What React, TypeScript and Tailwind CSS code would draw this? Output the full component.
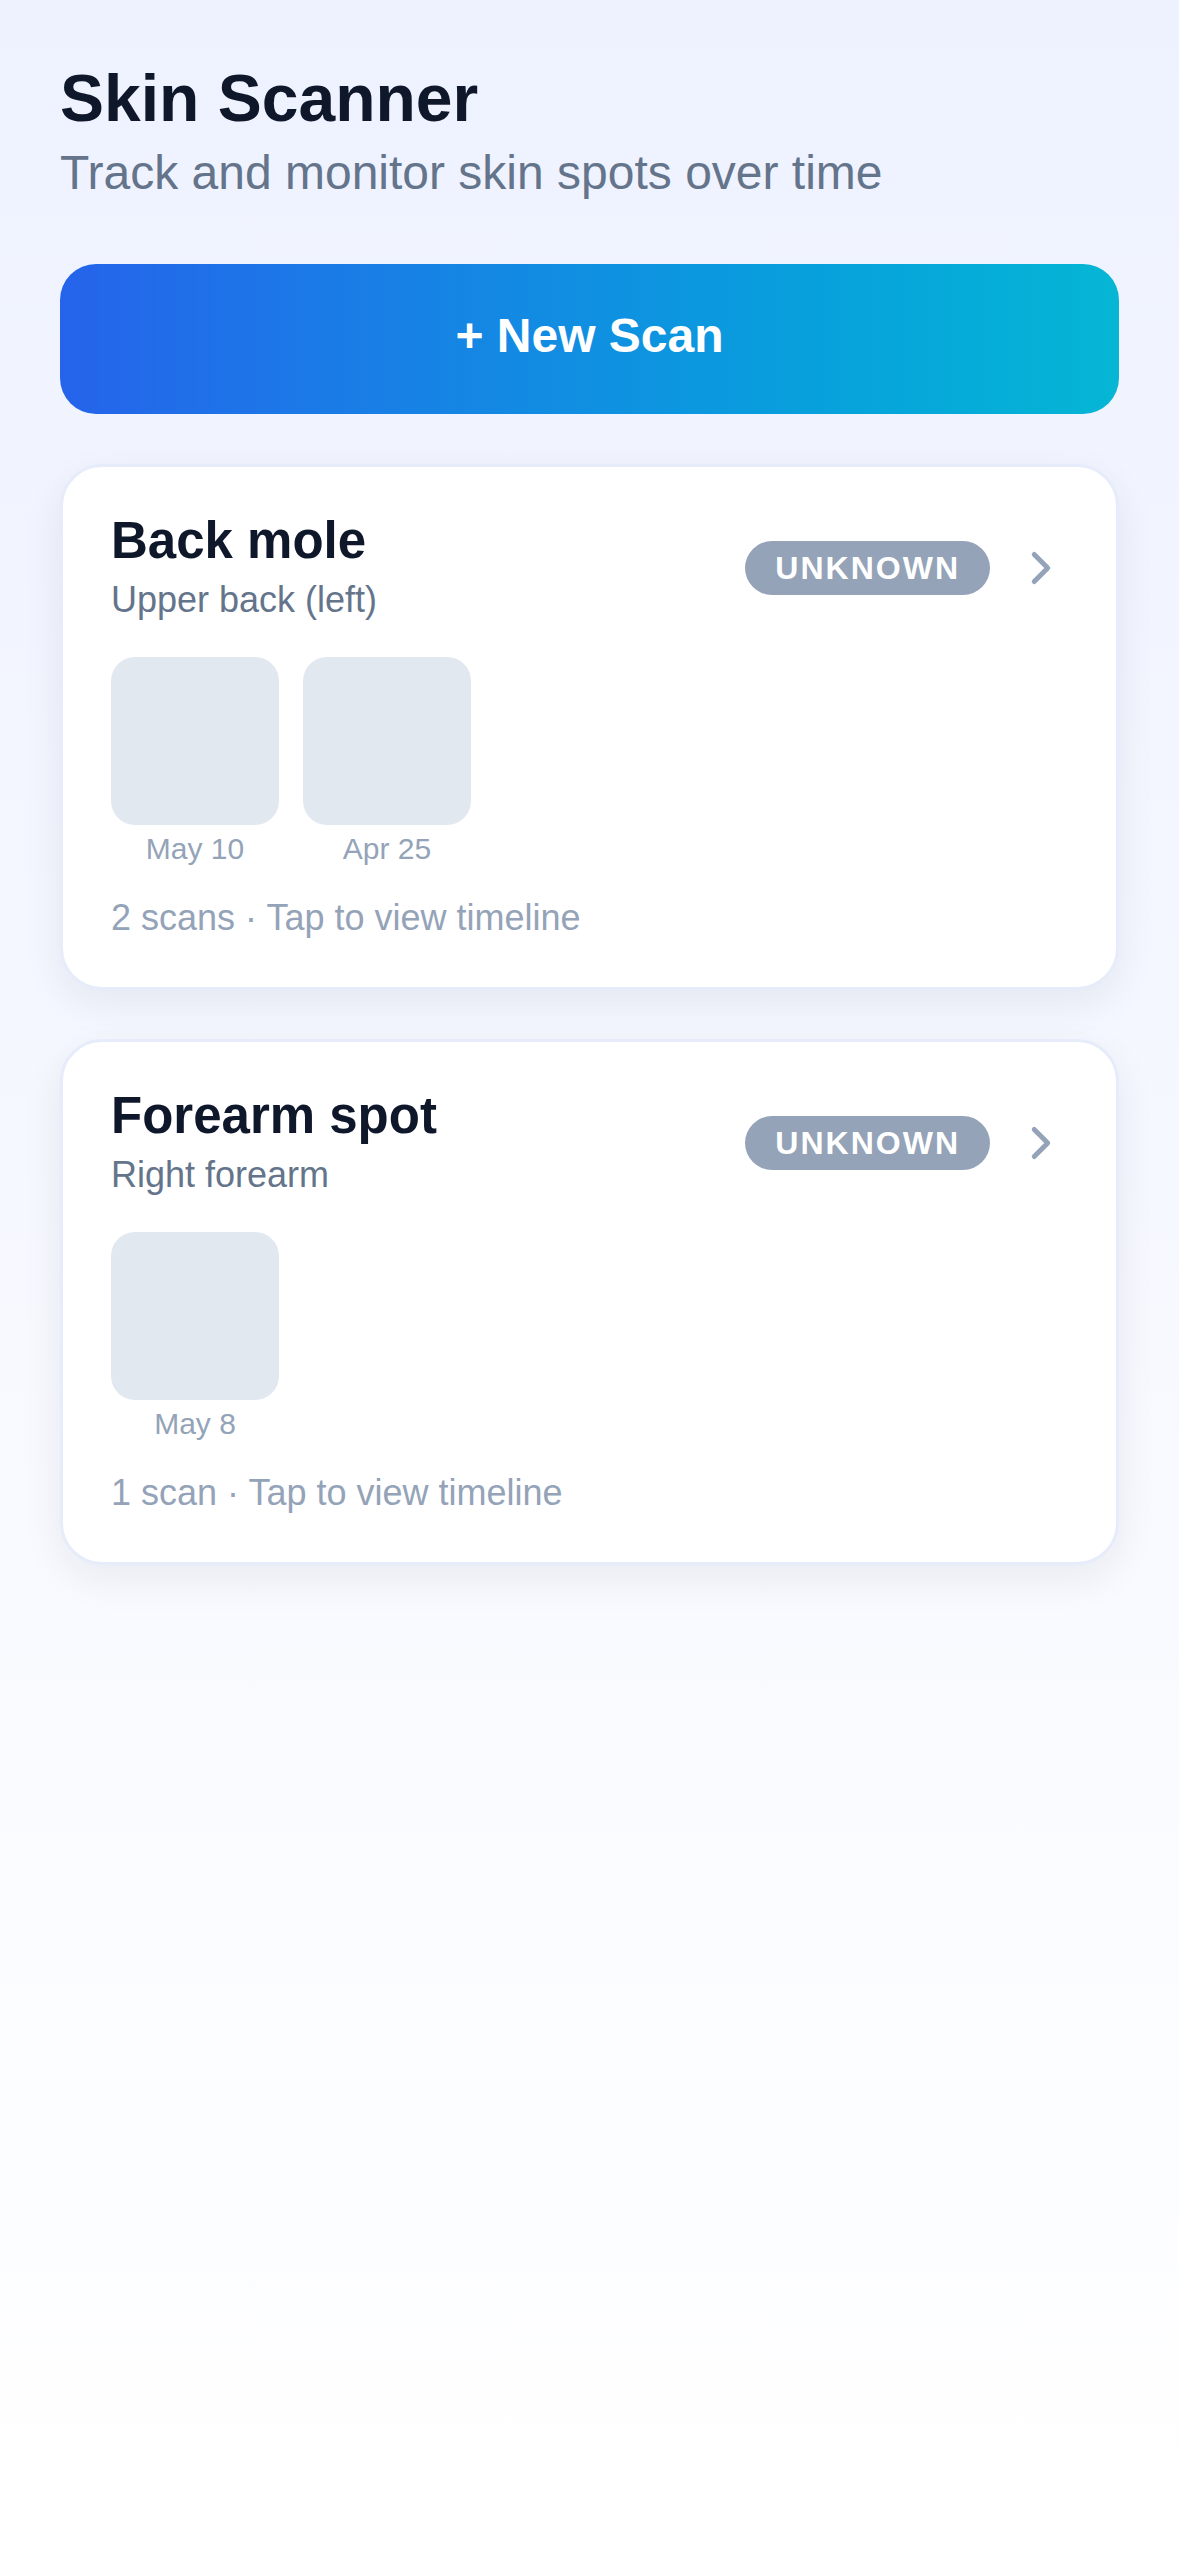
import { ChevronRight } from "lucide-react";

type Spot = {
  name: string;
  location: string;
  status: string;
  scans: { date: string }[];
};

const spots: Spot[] = [
  {
    name: "Back mole",
    location: "Upper back (left)",
    status: "UNKNOWN",
    scans: [{ date: "May 10" }, { date: "Apr 25" }],
  },
  {
    name: "Forearm spot",
    location: "Right forearm",
    status: "UNKNOWN",
    scans: [{ date: "May 8" }],
  },
];

function SpotCard({ spot }: { spot: Spot }) {
  const count = spot.scans.length;
  return (
    <div className="bg-white border-[3px] border-[#e7ecfb] rounded-[42px] px-[48px] pt-[48px] pb-[48px] shadow-[0_14px_40px_rgba(15,23,42,0.07)]">
      {/* Header */}
      <div className="flex items-center">
        <div className="flex-1 min-w-0">
          <h2 className="text-[51px] leading-none font-bold text-[#0f172a]">{spot.name}</h2>
          <p className="mt-[13px] text-[36px] leading-[42px] text-[#64748b]">{spot.location}</p>
        </div>
        <span className="h-[54px] px-[30px] flex items-center rounded-full bg-[#94a3b8] text-white text-[32px] leading-none font-bold tracking-[2px]">
          {spot.status}
        </span>
        <ChevronRight className="ml-[24px] w-[54px] h-[54px] text-[#94a3b8]" strokeWidth={2.2} />
      </div>

      {/* Thumbnails */}
      <div className="mt-[36px] flex gap-[24px]">
        {spot.scans.map((s) => (
          <div key={s.date} className="flex flex-col items-center">
            <div className="w-[168px] h-[168px] rounded-[24px] bg-[#e2e8f0]"></div>
            <span className="mt-[6px] text-[30px] leading-[36px] text-[#94a3b8]">{s.date}</span>
          </div>
        ))}
      </div>

      <p className="mt-[30px] text-[36px] leading-[42px] text-[#94a3b8]">
        {count} {count === 1 ? "scan" : "scans"} · Tap to view timeline
      </p>
    </div>
  );
}

export default function App() {
  return (
    <div
      className="min-h-screen bg-gradient-to-b from-[#eef2ff] to-white px-[60px] pt-[60px] pb-[60px]"
      style={{ fontFamily: '"Liberation Sans", Arial, sans-serif' }}
    >
      <h1 className="text-[66px] leading-[76px] font-bold text-[#0f172a]">Skin Scanner</h1>
      <p className="mt-[9px] text-[48px] leading-[55px] text-[#64748b]">Track and monitor skin spots over time</p>

      <button className="mt-[64px] w-full h-[150px] pb-[6px] rounded-[36px] bg-gradient-to-r from-[#2563eb] to-[#06b6d4] text-white text-[48px] font-bold leading-none">
        + New Scan
      </button>

      <div className="mt-[50px] flex flex-col gap-[49px]">
        {spots.map((s) => (
          <SpotCard key={s.name} spot={s} />
        ))}
      </div>
    </div>
  );
}
